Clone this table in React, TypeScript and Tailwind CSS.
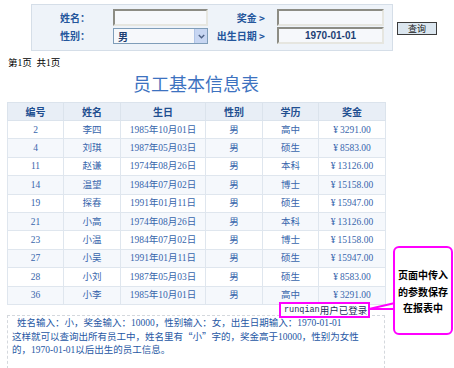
import React from 'react';

const rows = [
  ['2', '李四', '1985年10月01日', '男', '高中', '3291.00'],
  ['4', '刘琪', '1987年05月03日', '男', '硕生', '8583.00'],
  ['11', '赵谦', '1974年08月26日', '男', '本科', '13126.00'],
  ['14', '温望', '1984年07月02日', '男', '博士', '15158.00'],
  ['19', '探春', '1991年01月11日', '男', '硕生', '15947.00'],
  ['21', '小高', '1974年08月26日', '男', '本科', '13126.00'],
  ['23', '小温', '1984年07月02日', '男', '博士', '15158.00'],
  ['27', '小吴', '1991年01月11日', '男', '硕生', '15947.00'],
  ['28', '小刘', '1987年05月03日', '男', '硕生', '8583.00'],
  ['36', '小李', '1985年10月01日', '男', '高中', '3291.00'],
];

const headers = ['编号', '姓名', '生日', '性别', '学历', '奖金'];
const widths = ['w-[56px]', 'w-[57px]', 'w-[85px]', 'w-[57px]', 'w-[56px]', 'w-[67px]'];

const serif = "font-['Liberation_Serif','Noto_Sans_CJK_SC',serif]";
const sans = "font-['Noto_Sans_CJK_SC','Liberation_Sans',sans-serif]";

const SearchForm = () => (
  <div className="flex items-start">
    <div className="ml-[31px] mt-[4px] w-[362px] h-[47px] bg-[#eef3f9] border border-[#d5dee8] pt-[4px]">
      <div className="grid grid-cols-[81px_95px_69px_107px] gap-y-[1px] text-[10px] font-bold text-[#24569c]">
        <div className="pl-[28px] flex items-center h-[17px]">姓名：</div>
        <div className="h-[17px] bg-[#f6f8fb] border-2 border-t-[#8c8c84] border-l-[#8c8c84] border-b-[#e6e6e0] border-r-[#e6e6e0]" />
        <div className="flex items-center justify-end pr-[12px] h-[17px]">奖金 &gt;</div>
        <div className="h-[17px] bg-[#f6f8fb] border-2 border-t-[#8c8c84] border-l-[#8c8c84] border-b-[#e6e6e0] border-r-[#e6e6e0]" />

        <div className="pl-[28px] flex items-center h-[17px]">性别：</div>
        <div className="h-[16px] mt-[1px] flex items-center bg-[#f6f8fb] border border-[#7f9db9]">
          <span className="flex-1 pl-[4px] text-[#1d3f73]">男</span>
          <span className="w-[13px] h-[14px] bg-[#c7d6f2] border-l border-[#b0c4e6] flex items-center justify-center">
            <svg width="7" height="5" viewBox="0 0 7 5">
              <path d="M0.8 1 L3.5 3.8 L6.2 1" fill="none" stroke="#4d6185" strokeWidth="1.4" />
            </svg>
          </span>
        </div>
        <div className="flex items-center justify-end pr-[12px] h-[17px]">出生日期 &gt;</div>
        <div className="h-[17px] flex items-center justify-center bg-[#f6f8fb] border-2 border-t-[#8c8c84] border-l-[#8c8c84] border-b-[#e6e6e0] border-r-[#e6e6e0] text-[#1d3f73] font-['Liberation_Sans',sans-serif]">
          1970-01-01
        </div>
      </div>
    </div>
    <button
      type="button"
      className="ml-[4px] mt-[22px] w-[40px] h-[13px] bg-[#dbe6ef] border border-[#3c3c3c] text-[9px] leading-none text-[#222] flex items-center justify-center"
    >
      查询
    </button>
  </div>
);

const App = () => {
  return (
    <div className={`relative w-[454px] h-[368px] bg-white overflow-hidden ${sans}`}>
      <SearchForm />

      <div className={`ml-[8px] mt-[6px] h-[13px] text-[9.5px] leading-[13px] text-black ${serif}`}>
        第1页&nbsp;&nbsp;共1页
      </div>

      <div className="w-[392px] text-center mt-[2px] text-[18px] leading-[23px] text-[#3d72c0]">
        员工基本信息表
      </div>

      <table className={`ml-[7px] mt-[7px] w-[378px] border-collapse table-fixed text-[9.5px] ${serif}`}>
        <thead>
          <tr className="bg-[#e8eef6]">
            {headers.map((h, i) => (
              <th
                key={h}
                className={`${widths[i]} h-[18px] p-0 border border-[#dbe3ec] font-bold text-[10px] text-[#1f4f90] ${sans}`}
              >
                {h}
              </th>
            ))}
          </tr>
        </thead>
        <tbody>
          {rows.map((r, idx) => (
            <tr key={r[0]} className={idx % 2 === 1 ? 'bg-[#f5f8fc]' : 'bg-white'}>
              {r.map((c, i) => (
                <td
                  key={i}
                  className="h-[18.4px] p-0 border border-[#dfe6ee] text-center text-[#3866ac]"
                >
                  {i === 5 ? (
                    <>
                      <span className="mr-[2px]">¥</span>
                      {c}
                    </>
                  ) : (
                    c
                  )}
                </td>
              ))}
            </tr>
          ))}
        </tbody>
      </table>

      <div className={`ml-[7px] mt-[10px] w-[378px] h-[54px] border border-dashed border-[#d4d8dd] pl-[4px] pt-[1px] text-[9.5px] leading-[13px] text-[#2657a4] ${serif}`}>
        <div className="pl-[5px]">姓名输入：小，奖金输入：10000，性别输入：女，出生日期输入：1970-01-01</div>
        <div>
          这样就可以查询出所有员工中，姓名里有
          <span className={`inline-block w-[9.5px] text-right ${sans}`}>“</span>小
          <span className={`inline-block w-[9.5px] text-left ${sans}`}>”</span>
          字的，奖金高于10000，性别为女性
        </div>
        <div>的，1970-01-01以后出生的员工信息。</div>
      </div>

      {/* 登录提示 */}
      <div className="absolute left-[279px] top-[302px] w-[91px] h-[16px] border-2 border-[#ff00ff] bg-white flex items-center pl-[3px] text-[9.5px] text-[#1b2f5a]">
        <span className="font-['Liberation_Mono',monospace] text-[8.5px]">runqian</span>
        <span>用户已登录</span>
      </div>

      <svg className="absolute left-[368px] top-[300px]" width="28" height="14" viewBox="0 0 28 14">
        <path d="M1 9 L27 3" stroke="#ff00ff" strokeWidth="2" fill="none" />
        <path d="M1 9 L27 9" stroke="#ff00ff" strokeWidth="2" fill="none" />
      </svg>

      <div className="absolute left-[393px] top-[246px] w-[60px] h-[89px] border-2 border-[#ff00ff] rounded-[6px] bg-white flex flex-col items-center justify-center text-[10px] leading-[16.5px] font-bold text-black pt-[3px]">
        <div>页面中传入</div>
        <div>的参数保存</div>
        <div>在报表中</div>
      </div>
    </div>
  );
};

export default App;
